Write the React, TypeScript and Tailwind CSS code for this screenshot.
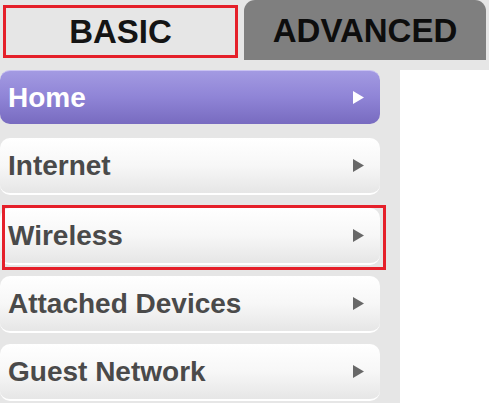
import React from "react";

function Arrow({ white }: { white?: boolean }) {
  return (
    <svg width="11" height="13" viewBox="0 0 11 13" className="shrink-0">
      <path d="M0 0 L11 6.5 L0 13 Z" fill={white ? "#ffffff" : "#686868"} />
    </svg>
  );
}

function NavItem({ label, active, className = "" }: { label: string; active?: boolean; className?: string }) {
  return (
    <div
      className={
        "w-[380px] flex items-center justify-between pl-[8px] pr-[16px] rounded-[10px] text-[28px] font-bold tracking-[0px] " +
        (active
          ? "h-[54px] bg-gradient-to-b from-[#a39ae2] via-[#8f84d6] to-[#786bc0] text-white border-t border-[#c9c2f2] "
          : "h-[57px] bg-gradient-to-b from-white via-[#f7f7f7] to-[#e6e6e6] text-[#4a4a4a] border-b-2 border-white ") +
        className
      }
    >
      <span className="leading-none">{label}</span>
      <Arrow white={active} />
    </div>
  );
}

export default function App() {
  return (
    <div className="w-[489px] h-[403px] overflow-hidden bg-[#e6e6e6] font-['Liberation_Sans',Arial,sans-serif] flex flex-col">
      <div className="flex h-[60px] shrink-0">
        <div className="ml-[3px] mt-[5px] w-[235px] h-[53px] border-[3px] border-[#e5202a] flex items-center justify-center text-[33px] font-bold text-[#141414] leading-none">
          BASIC
        </div>
        <div className="ml-[6px] w-[242px] h-[60px] bg-[#7f7f7f] rounded-t-[11px] flex items-center justify-center text-[33px] font-bold text-[#0d0d0d] leading-none">
          ADVANCED
        </div>
      </div>
      <div className="mt-[10px] flex flex-1">
        <div className="w-[400px] flex flex-col">
          <NavItem label="Home" active />
          <NavItem label="Internet" className="mt-[14px]" />
          <div className="relative mt-[13px]">
            <NavItem label="Wireless" />
            <div className="absolute left-[2px] top-[-3px] w-[384px] h-[65px] border-[3px] border-[#e5202a]" />
          </div>
          <NavItem label="Attached Devices" className="mt-[11px]" />
          <NavItem label="Guest Network" className="mt-[11px]" />
        </div>
        <div className="flex-1 bg-white" />
      </div>
    </div>
  );
}
